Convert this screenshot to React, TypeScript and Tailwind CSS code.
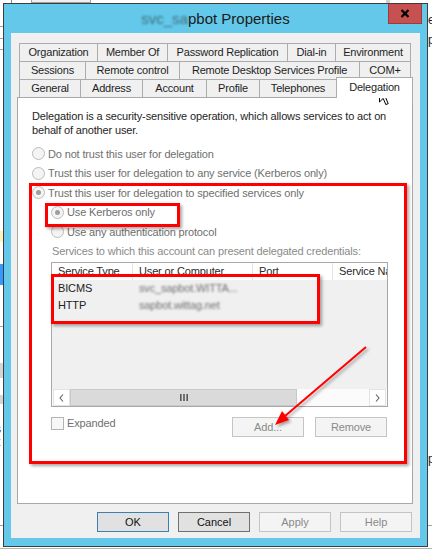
import React from "react";

const row1 = [
  { w: "w-[78px]", t: "Organization" },
  { w: "w-[70px]", t: "Member Of" },
  { w: "w-[120px]", t: "Password Replication" },
  { w: "w-[48px]", t: "Dial-in" },
  { w: "w-[76px]", t: "Environment" },
];
const row2 = [
  { w: "w-[66px]", t: "Sessions" },
  { w: "w-[94px]", t: "Remote control" },
  { w: "w-[180px]", t: "Remote Desktop Services Profile" },
  { w: "w-[52px]", t: "COM+" },
];
const row3 = [
  { w: "w-[61px]", t: "General" },
  { w: "w-[62px]", t: "Address" },
  { w: "w-[64px]", t: "Account" },
  { w: "w-[53px]", t: "Profile" },
  { w: "w-[77px]", t: "Telephones" },
];

function TabRow({ tabs, closeRight }: { tabs: { w: string; t: string }[]; closeRight: boolean }) {
  return (
    <>
      {tabs.map((tab, i) => (
        <div
          key={tab.t}
          className={`${tab.w} h-[18px] shrink-0 border-t border-l border-[#acacac] bg-[#f0f0f0] flex items-center justify-center text-[11px] tracking-[-0.2px] text-[#1e1e1e] whitespace-nowrap ${
            closeRight && i === tabs.length - 1 ? "border-r" : ""
          }`}
        >
          {tab.t}
        </div>
      ))}
    </>
  );
}

function Radio({ checked }: { checked?: boolean }) {
  return (
    <span className="w-[13px] h-[13px] rounded-full border border-[#bcbcbc] bg-[#f4f4f4] flex items-center justify-center shrink-0">
      {checked && <span className="w-[5px] h-[5px] rounded-full bg-[#9e9e9e]" />}
    </span>
  );
}

function ChevronLeft() {
  return (
    <svg width="5" height="8" viewBox="0 0 5 8">
      <polyline points="4,0.5 1,4 4,7.5" fill="none" stroke="#606060" strokeWidth="1.1" />
    </svg>
  );
}
function ChevronRight() {
  return (
    <svg width="5" height="8" viewBox="0 0 5 8">
      <polyline points="1,0.5 4,4 1,7.5" fill="none" stroke="#606060" strokeWidth="1.1" />
    </svg>
  );
}

export default function App() {
  return (
    <div className="relative w-[432px] h-[549px] overflow-hidden bg-white font-['Liberation_Sans',Arial,sans-serif]">
      {/* desktop bits behind the dialog */}
      <div className="absolute left-[11px] top-0 w-[1px] h-[3px] bg-[#8a8a8a]" />
      <div className="absolute left-[31px] top-[-11px] w-[60px] h-[14px] border border-[#a0a0a0] bg-[#f0f0f0] text-[11px] leading-[12px] text-center text-[#222]">
        Advanced
      </div>
      <div className="absolute left-[386px] top-0 w-[4px] h-[3px] bg-[#d0d0d0]" />
      <div className="absolute left-0 top-[26px] w-[3px] h-[1px] bg-[#a0a0a0]" />
      <div className="absolute left-0 top-[38px] w-[3px] h-[1px] bg-[#a0a0a0]" />
      <div className="absolute left-0 top-[49px] w-[3px] h-[1px] bg-[#a0a0a0]" />
      <div className="absolute left-0 top-[231px] w-[3px] h-[11px] bg-[#fff2b8]" />
      <div className="absolute left-0 top-[264px] w-[3px] h-[21px] bg-[#3399ff]" />
      <div className="absolute left-0 top-[326px] w-[3px] h-[1px] bg-[#a0a0a0]" />
      <div className="absolute left-0 top-[363px] w-[3px] h-[15px] bg-[#d4d4d4]" />
      <div className="absolute left-0 top-[395px] w-[3px] h-[9px] bg-[#d4d4d4]" />
      <div className="absolute left-[-5px] top-[422px] text-[12px] leading-[14px] text-[#222]">s</div>
      <div className="absolute left-[-3px] top-[435px] text-[12px] leading-[14px] text-[#222]">t</div>
      <div className="absolute left-0 top-[525px] w-[3px] h-[1px] bg-[#a0a0a0]" />
      <div className="absolute left-[428px] top-[13px] text-[12px] leading-[14px] text-[#222]">e</div>
      <div className="absolute left-[428px] top-[33px] text-[12px] leading-[14px] text-[#222]">p</div>
      <div className="absolute left-[428px] top-[452px] text-[12px] leading-[14px] text-[#222]">p</div>
      <div className="absolute left-[428px] top-[525px] w-[4px] h-[1px] bg-[#a0a0a0]" />
      <div className="absolute left-0 top-[548px] w-[432px] h-[1px] bg-[#b4b4b4]" />

      {/* dialog window */}
      <div className="absolute left-[3px] top-[3px] w-[425px] h-[544px] border border-[#3d3d3d] bg-[#63c8e9] flex flex-col">
        <div className="relative h-[29px] shrink-0 flex items-center justify-center">
          <span className="text-[15px] text-[#1b1b1b] mt-[1px] whitespace-nowrap">
            <span className="blur-[1px] text-[#3f6f80]">svc_sa</span>pbot Properties
          </span>
          <div className="absolute right-[5px] top-0 w-[34px] h-[20px] bg-[#c75050] border border-t-0 border-[#9a3c3c] flex items-center justify-center">
            <svg width="10" height="9" viewBox="0 0 10 9">
              <line x1="1.5" y1="1" x2="8.5" y2="8" stroke="#000" strokeWidth="2.3" />
              <line x1="8.5" y1="1" x2="1.5" y2="8" stroke="#000" strokeWidth="2.3" />
            </svg>
          </div>
        </div>

        <div className="mx-[7px] h-[505px] shrink-0 bg-[#f0f0f0] pt-[10px] pl-[6px] flex flex-col">
          <div className="ml-[2px] flex">
            <TabRow tabs={row1} closeRight />
          </div>
          <div className="ml-[2px] flex">
            <TabRow tabs={row2} closeRight />
          </div>
          <div className="ml-[2px] flex h-[18px]">
            <TabRow tabs={row3} closeRight={false} />
            <div className="relative z-10 w-[77px] h-[21px] -mt-[2px] shrink-0 bg-white border-t border-l border-r border-[#acacac] flex items-center justify-center pb-[2px] text-[11px] tracking-[-0.2px] text-[#1e1e1e]">
              Delegation
            </div>
          </div>

          {/* tab panel */}
          <div className="w-[396px] h-[407px] shrink-0 border border-[#a8a8a8] bg-white flex flex-col text-[11px] tracking-[-0.15px]">
            <p className="mt-[11px] ml-[14px] leading-[14px] text-[#1e1e1e] whitespace-nowrap">
              Delegation is a security-sensitive operation, which allows services to act on
              <br />
              behalf of another user.
            </p>

            <div className="mt-[7px] flex flex-col text-[#6f6f6f]">
              <div className="h-[19px] ml-[14px] flex items-center gap-[3px]">
                <Radio />
                <span className="leading-[14px]">Do not trust this user for delegation</span>
              </div>
              <div className="h-[20px] ml-[14px] flex items-center gap-[3px]">
                <Radio />
                <span className="leading-[14px]">Trust this user for delegation to any service (Kerberos only)</span>
              </div>
              <div className="h-[19px] ml-[14px] flex items-center gap-[3px]">
                <Radio checked />
                <span className="leading-[14px]">Trust this user for delegation to specified services only</span>
              </div>
              <div className="h-[20px] ml-[33px] flex items-center gap-[3px]">
                <Radio checked />
                <span className="leading-[14px]">Use Kerberos only</span>
              </div>
              <div className="h-[19px] ml-[33px] flex items-center gap-[3px]">
                <Radio />
                <span className="leading-[14px]">Use any authentication protocol</span>
              </div>
            </div>

            <div className="mt-[3px] ml-[34px] leading-[14px] text-[#8a8a8a] whitespace-nowrap">
              Services to which this account can present delegated credentials:
            </div>

            {/* list view */}
            <div className="mt-[4px] ml-[33px] w-[337px] h-[145px] shrink-0 border border-[#a8a8a8] bg-[#f0f0f0] flex flex-col">
              <div className="h-[17px] shrink-0 bg-white flex leading-[17px] text-[#2a2a2a] whitespace-nowrap overflow-hidden">
                <div className="w-[81px] shrink-0 pl-[6px] border-r border-[#e5e5e5]">Service Type</div>
                <div className="w-[120px] shrink-0 pl-[6px] border-r border-[#e5e5e5]">User or Computer</div>
                <div className="w-[80px] shrink-0 pl-[6px] border-r border-[#e5e5e5]">Port</div>
                <div className="flex-1 pl-[6px] overflow-hidden">Service Name</div>
              </div>
              <div className="flex-1 flex flex-col text-[#222] leading-[17px]">
                <div className="flex h-[17px]">
                  <div className="w-[81px] pl-[6px]">BICMS</div>
                  <div className="pl-[6px] text-[#6e6e6e] blur-[0.8px]">svc_sapbot.WITTA...</div>
                </div>
                <div className="flex h-[17px]">
                  <div className="w-[81px] pl-[6px]">HTTP</div>
                  <div className="pl-[6px] text-[#6e6e6e] blur-[0.8px]">sapbot.wittag.net</div>
                </div>
              </div>
              <div className="h-[17px] shrink-0 px-[1px] flex bg-[#fbfbfb]">
                <div className="w-[17px] h-full border border-[#e3e3e3] bg-white flex items-center justify-center">
                  <ChevronLeft />
                </div>
                <div className="w-[227px] h-full border border-[#c9c9c9] bg-[#dadada] flex items-center justify-center">
                  <svg width="8" height="7" viewBox="0 0 8 7">
                    <rect x="0" y="0" width="1.6" height="7" fill="#5a5a5a" />
                    <rect x="3.2" y="0" width="1.6" height="7" fill="#5a5a5a" />
                    <rect x="6.4" y="0" width="1.6" height="7" fill="#5a5a5a" />
                  </svg>
                </div>
                <div className="flex-1" />
                <div className="w-[17px] h-full border border-[#e3e3e3] bg-white flex items-center justify-center">
                  <ChevronRight />
                </div>
              </div>
            </div>

            <div className="mt-[10px] ml-[33px] w-[337px] flex items-start">
              <span className="w-[13px] h-[13px] shrink-0 border border-[#b4b4b4] bg-[#f7f7f7]" />
              <span className="ml-[3px] -mt-[1px] leading-[14px] text-[#6f6f6f]">Expanded</span>
              <div className="ml-auto flex gap-[11px] mr-[1px]">
                <div className="w-[72px] h-[20px] border border-[#c4c4c4] bg-[#f4f4f4] flex items-center justify-center text-[#8a8a8a]">
                  Add...
                </div>
                <div className="w-[72px] h-[20px] border border-[#c4c4c4] bg-[#f4f4f4] flex items-center justify-center text-[#8a8a8a]">
                  Remove
                </div>
              </div>
            </div>
          </div>

          {/* dialog buttons */}
          <div className="mt-[8px] pr-[8px] flex justify-end gap-[9px] text-[11px]">
            <div className="w-[72px] h-[20px] border border-[#3c7fb1] bg-[#e1e1e1] flex items-center justify-center text-[#111]">OK</div>
            <div className="w-[72px] h-[20px] border border-[#707070] bg-[#e1e1e1] flex items-center justify-center text-[#111]">Cancel</div>
            <div className="w-[72px] h-[20px] border border-[#c4c4c4] bg-[#f4f4f4] flex items-center justify-center text-[#8a8a8a]">Apply</div>
            <div className="w-[72px] h-[20px] border border-[#c4c4c4] bg-[#f4f4f4] flex items-center justify-center text-[#8a8a8a]">Help</div>
          </div>
        </div>
      </div>

      {/* red annotations */}
      <div className="absolute left-[29px] top-[183px] w-[378px] h-[281px] border-[3px] border-[#ff0000] shadow-[2px_2px_3px_rgba(0,0,0,0.35)]" />
      <div className="absolute left-[45px] top-[203px] w-[135px] h-[24px] border-[3px] border-[#ff0000] shadow-[2px_2px_3px_rgba(0,0,0,0.35)]" />
      <div className="absolute left-[51px] top-[274px] w-[269px] h-[50px] border-[3px] border-[#ff0000] shadow-[2px_2px_3px_rgba(0,0,0,0.35)]" />
      <svg className="absolute left-0 top-0" width="432" height="549" viewBox="0 0 432 549">
        <defs>
          <filter id="sh" x="-20%" y="-20%" width="140%" height="140%">
            <feDropShadow dx="2" dy="2" stdDeviation="1.5" floodColor="#000" floodOpacity="0.35" />
          </filter>
        </defs>
        <g filter="url(#sh)">
          <line x1="366" y1="347" x2="285" y2="416" stroke="#ff0000" strokeWidth="2" />
          <polygon points="275,425 289,420 282,411" fill="#ff0000" />
        </g>
      </svg>

      {/* mouse cursor */}
      <svg className="absolute left-[379px] top-[86px]" width="14" height="21" viewBox="0 0 14 21">
        <path
          d="M0.5,0.5 L0.5,16 L4.2,12.4 L6.8,18.6 L9.2,17.6 L6.6,11.5 L11.5,11.5 Z"
          fill="#fff"
          stroke="#000"
          strokeWidth="1"
          strokeLinejoin="miter"
        />
      </svg>
    </div>
  );
}
